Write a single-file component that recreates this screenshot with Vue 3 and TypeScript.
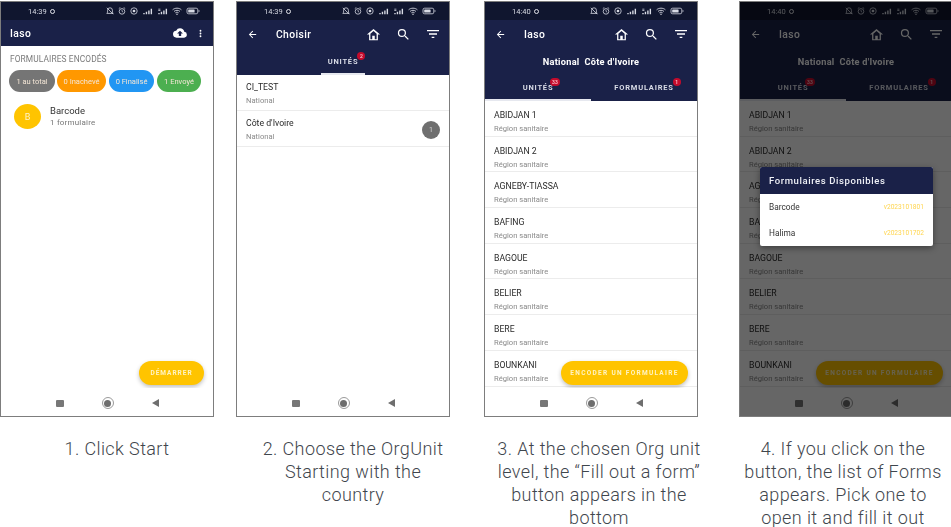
<script setup lang="ts">
interface Org { name: string; sub: string; count?: number }

const regions: Org[] = ['ABIDJAN 1', 'ABIDJAN 2', 'AGNEBY-TIASSA', 'BAFING', 'BAGOUE', 'BELIER', 'BERE', 'BOUNKANI']
  .map((name) => ({ name, sub: 'Région sanitaire' }))

const countries: Org[] = [
  { name: 'CI_TEST', sub: 'National' },
  { name: "Côte d'Ivoire", sub: 'National', count: 1 },
]
const pills = [
  { label: '1 au total', cls: 'grey' },
  { label: '0 Inachevé', cls: 'orange' },
  { label: '0 Finalisé', cls: 'blue' },
  { label: '1 Envoyé', cls: 'green' },
]
const statusGlyphs = ['mute', 'alarm', 'target', 'sig', 'sig2', 'wifi', 'batt']
const forms = [
  { name: 'Barcode', version: 'v2023101801' },
  { name: 'Halima', version: 'v2023101702' },
]
</script>

<template>
  <div class="board">
    <svg class="defs" aria-hidden="true">
      <defs>
        <symbol id="mute" viewBox="0 0 10 10"><path d="M5 1a3 3 0 0 0-3 3v2.500L1 8h8L8 6.500V4a3 3 0 0 0-3-3zM1 1l8 8" fill="none" stroke="currentColor" stroke-width="1"/></symbol>
        <symbol id="alarm" viewBox="0 0 10 10"><circle cx="5" cy="5.500" r="3.500" fill="none" stroke="currentColor" stroke-width="1"/><path d="M1 2l2-1.500M9 2L7 .5M5 3.500v2l1.500 1" fill="none" stroke="currentColor" stroke-width=".9"/></symbol>
        <symbol id="target" viewBox="0 0 10 10"><circle cx="5" cy="5" r="4" fill="none" stroke="currentColor" stroke-width="1"/><circle cx="5" cy="5" r="1.700" fill="currentColor"/></symbol>
        <symbol id="sig" viewBox="0 0 14 10"><path d="M1 7h2v2H1zM4.500 5.500h2V9h-2zM8 3.500h2V9H8zM11.500 1h2v8h-2z" fill="currentColor"/></symbol>
        <symbol id="sig2" viewBox="0 0 14 10"><path d="M1 1h3v1H1zM1 3h3v1H1zM1 7h2v2H1zM4.500 5.500h2V9h-2zM8 3.500h2V9H8zM11.500 1h2v8h-2z" fill="currentColor"/></symbol>
        <symbol id="wifi" viewBox="0 0 12 10"><path d="M.5 3.500C3.500.8 8.500.8 11.500 3.500M2.300 5.500c2-1.800 5.400-1.800 7.400 0M4 7.300c1.100-1 2.900-1 4 0" fill="none" stroke="currentColor" stroke-width="1.100"/><circle cx="6" cy="9" r=".9" fill="currentColor"/></symbol>
        <symbol id="batt" viewBox="0 0 16 10"><rect x=".5" y="1.500" width="13.500" height="7" rx="2" fill="none" stroke="currentColor" stroke-width="1"/><rect x="2" y="3" width="8" height="4" rx=".8" fill="currentColor"/><path d="M15 4h1v2h-1z" fill="currentColor"/></symbol>
        <symbol id="cloud" viewBox="0 0 24 24"><path fill-rule="evenodd" d="M19.350 10.040A7.490 7.490 0 0 0 12 4a7.500 7.500 0 0 0-6.650 4.040A6 6 0 0 0 6 20h13a5 5 0 0 0 .35-9.960zM14 13v4h-4v-4H7l5-5 5 5z" fill="currentColor"/></symbol>
        <symbol id="dots" viewBox="0 0 24 24"><path d="M12 8a2 2 0 1 0 0-4 2 2 0 0 0 0 4zm0 2a2 2 0 1 0 0 4 2 2 0 0 0 0-4zm0 6a2 2 0 1 0 0 4 2 2 0 0 0 0-4z" fill="currentColor"/></symbol>
        <symbol id="back" viewBox="0 0 24 24"><path d="M20 11H7.830l5.590-5.590L12 4l-8 8 8 8 1.410-1.410L7.830 13H20z" fill="currentColor"/></symbol>
        <symbol id="home" viewBox="0 0 24 24"><path d="M12 3 1.500 12H5v9h14v-9h3.500zM7 19.500v-8.800l5-4.500 5 4.500v8.800h-3V14h-4v5.500z" fill="currentColor" fill-rule="evenodd"/></symbol>
        <symbol id="search" viewBox="0 0 24 24"><path d="M15.500 14h-.79l-.28-.27A6.470 6.470 0 0 0 16 9.500 6.500 6.500 0 1 0 9.500 16c1.610 0 3.090-.59 4.230-1.570l.27.28v.79l5 4.990L20.490 19l-4.990-5zm-6 0a4.500 4.500 0 1 1 0-9 4.500 4.500 0 0 1 0 9z" fill="currentColor"/></symbol>
        <symbol id="filter" viewBox="0 0 24 24"><path d="M10 18h4v-2h-4v2zM3 6v2h18V6H3zm3 7h12v-2H6v2z" fill="currentColor"/></symbol>
      </defs>
    </svg>

    <!-- Step 1 -->
    <section class="step s1">
      <div class="phone">
        <div class="status"><span class="time">14:39</span><i class="rec"></i><span class="glyphs"><svg v-for="g in statusGlyphs" :key="g" :class="['st', g]"><use :href="'#' + g" /></svg></span></div>
        <header class="bar">
          <span class="title plain">Iaso</span>
          <svg class="ic cloud"><use href="#cloud" /></svg>
          <svg class="ic dots"><use href="#dots" /></svg>
        </header>
        <main class="body home">
          <p class="section">FORMULAIRES ENCODÉS</p>
          <div class="pills"><span v-for="p in pills" :key="p.label" :class="['pill', p.cls]">{{ p.label }}</span></div>
          <div class="form-row">
            <span class="avatar">B</span>
            <div><div class="form-name">Barcode</div><div class="form-sub">1 formulaire</div></div>
          </div>
        </main>
        <button class="fab start">DÉMARRER</button>
        <nav class="nav"><i class="sq"></i><i class="ring"></i><i class="tri"></i></nav>
      </div>
      <p class="caption">1. Click Start</p>
    </section>

    <!-- Step 2 -->
    <section class="step s2">
      <div class="phone">
        <div class="status"><span class="time">14:39</span><i class="rec"></i><span class="glyphs"><svg v-for="g in statusGlyphs" :key="g" :class="['st', g]"><use :href="'#' + g" /></svg></span></div>
        <header class="bar tall">
          <svg class="ic back"><use href="#back" /></svg>
          <span class="title">Choisir</span>
          <svg class="ic home-ic"><use href="#home" /></svg>
          <svg class="ic search"><use href="#search" /></svg>
          <svg class="ic filter"><use href="#filter" /></svg>
        </header>
        <div class="tabs single">
          <div class="tab active"><span class="tab-label">UNITÉS<b class="badge">2</b></span></div>
        </div>
        <main class="body">
          <div v-for="o in countries" :key="o.name" class="org">
            <div><div class="org-name">{{ o.name }}</div><div class="org-sub">{{ o.sub }}</div></div>
            <span v-if="o.count" class="count">{{ o.count }}</span>
          </div>
        </main>
        <nav class="nav"><i class="sq"></i><i class="ring"></i><i class="tri"></i></nav>
      </div>
      <p class="caption">2. Choose the OrgUnit Starting with the country</p>
    </section>

    <!-- Step 3 -->
    <section class="step s3">
      <div class="phone">
        <div class="status"><span class="time">14:40</span><i class="rec"></i><span class="glyphs"><svg v-for="g in statusGlyphs" :key="g" :class="['st', g]"><use :href="'#' + g" /></svg></span></div>
        <header class="bar tall">
          <svg class="ic back"><use href="#back" /></svg>
          <span class="title plain">Iaso</span>
          <svg class="ic home-ic"><use href="#home" /></svg>
          <svg class="ic search"><use href="#search" /></svg>
          <svg class="ic filter"><use href="#filter" /></svg>
        </header>
        <div class="crumb">National&nbsp;&nbsp;Côte d'Ivoire</div>
        <div class="tabs">
          <div class="tab active"><span class="tab-label">UNITÉS<b class="badge">33</b></span></div>
          <div class="tab"><span class="tab-label">FORMULAIRES<b class="badge">1</b></span></div>
        </div>
        <main class="body list">
          <div v-for="o in regions" :key="o.name" class="org region">
            <div><div class="org-name">{{ o.name }}</div><div class="org-sub">{{ o.sub }}</div></div>
          </div>
        </main>
        <button class="fab encode">ENCODER UN FORMULAIRE</button>
        <nav class="nav"><i class="sq"></i><i class="ring"></i><i class="tri"></i></nav>
      </div>
      <p class="caption">3. At the chosen Org unit level, the “Fill out a form” button appears in the bottom</p>
    </section>

    <!-- Step 4 -->
    <section class="step s4">
      <div class="phone">
        <div class="status"><span class="time">14:40</span><i class="rec"></i><span class="glyphs"><svg v-for="g in statusGlyphs" :key="g" :class="['st', g]"><use :href="'#' + g" /></svg></span></div>
        <header class="bar tall">
          <svg class="ic back"><use href="#back" /></svg>
          <span class="title plain">Iaso</span>
          <svg class="ic home-ic"><use href="#home" /></svg>
          <svg class="ic search"><use href="#search" /></svg>
          <svg class="ic filter"><use href="#filter" /></svg>
        </header>
        <div class="crumb">National&nbsp;&nbsp;Côte d'Ivoire</div>
        <div class="tabs">
          <div class="tab active"><span class="tab-label">UNITÉS<b class="badge">33</b></span></div>
          <div class="tab"><span class="tab-label">FORMULAIRES<b class="badge">1</b></span></div>
        </div>
        <main class="body list">
          <div v-for="o in regions" :key="o.name" class="org region">
            <div><div class="org-name">{{ o.name }}</div><div class="org-sub">{{ o.sub }}</div></div>
          </div>
        </main>
        <button class="fab encode">ENCODER UN FORMULAIRE</button>
        <nav class="nav"><i class="sq"></i><i class="ring"></i><i class="tri"></i></nav>
        <div class="scrim"></div>
        <div class="dialog">
          <div class="dialog-head">Formulaires Disponibles</div>
          <div v-for="f in forms" :key="f.name" class="dialog-row"><span>{{ f.name }}</span><em>{{ f.version }}</em></div>
        </div>
      </div>
      <p class="caption">4. If you click on the button, the list of Forms appears. Pick one to open it and fill it out</p>
    </section>
  </div>
</template>

<style>
html, body { margin: 0; background: #fff; overflow: hidden; }
</style>

<style scoped>
.board {
  width: 951px;
  height: 527px;
  overflow: hidden;
  display: flex;
  align-items: flex-start;
  padding-top: 1px;
  box-sizing: border-box;
  font-family: Roboto, "Liberation Sans", sans-serif;
}
.defs { position: absolute; width: 0; height: 0; }
.step { flex: 0 0 214px; min-width: 0; }
.s2 { margin-left: 22px; }
.s3 { margin-left: 34px; }
.s4 { margin-left: 41px; }

.phone {
  position: relative;
  width: 214px;
  height: 416px;
  box-sizing: border-box;
  border: 1px solid #7d7d7d;
  background: #fff;
  display: flex;
  flex-direction: column;
  overflow: hidden;
}
.phone > *:not(.scrim):not(.dialog) { filter: blur(.35px); }

.status {
  flex: 0 0 18px;
  background: #10162f;
  color: #d8dbe4;
  display: flex;
  align-items: center;
  padding: 0 13px 0 27px;
  font-size: 7.500px;
}
.rec { width: 5px; height: 5px; border-radius: 50%; margin-left: 3px; box-sizing: border-box; border: 1.500px solid #e2e4ea; }
.glyphs { margin-left: auto; display: flex; align-items: center; gap: 4px; }
.st { width: 8px; height: 8px; color: #d8dbe4; }
.st.sig, .st.sig2 { width: 11px; height: 7px; }
.st.wifi { width: 10px; }
.st.batt { width: 14px; }

.bar {
  flex: 0 0 26px;
  background: #1a2148;
  color: #fff;
  display: flex;
  align-items: center;
  padding: 0 9px;
}
.bar.tall { flex-basis: 28px; padding: 0 8px 0 10px; }
.title { font-size: 10.300px; font-weight: 500; letter-spacing: .4px; margin-left: 18px; }
.bar > .title.plain:first-child { margin-left: 0; }
.ic { color: #fff; flex: none; }
.cloud { width: 14px; height: 14px; margin-left: auto; }
.dots { width: 11px; height: 11px; margin-left: 8px; margin-right: -2px; }
.back { width: 11px; height: 11px; }
.home-ic { width: 15px; height: 15px; margin-left: auto; }
.search { width: 15px; height: 15px; margin-left: 15px; }
.filter { width: 16px; height: 16px; margin-left: 14px; }

.crumb {
  background: #1a2148;
  color: #fff;
  flex: 0 0 26px;
  display: flex;
  align-items: center;
  justify-content: center;
  font-size: 9.200px;
  font-weight: 700;
  letter-spacing: .25px;
}
.tabs {
  background: #1a2148;
  flex: 0 0 27px;
  display: flex;
  position: relative;
}
.tab {
  flex: 1;
  display: flex;
  align-items: center;
  justify-content: center;
  border-bottom: 2px solid transparent;
  box-sizing: border-box;
}
.tab.active { border-bottom-color: #e6e8ef; }
.tabs.single { justify-content: center; }
.tabs.single .tab { flex: 0 0 44px; }
.tab-label {
  position: relative;
  color: #d8dbe6;
  font-size: 7.500px;
  font-weight: 700;
  letter-spacing: .8px;
  top: 1px;
}
.badge {
  position: absolute;
  right: -7px;
  top: -5px;
  min-width: 8px;
  height: 8px;
  padding: 0 2.500px;
  box-sizing: border-box;
  border-radius: 4px;
  background: #c40b2c;
  color: #ffc9d2;
  font-size: 5px;
  line-height: 8px;
  text-align: center;
  letter-spacing: 0;
  font-weight: 500;
}

.body { flex: 1; min-height: 0; background: #fff; overflow: hidden; }
.section { margin: 0; padding: 8px 0 0 9px; font-size: 8.400px; line-height: 10px; color: #7b7b7b; letter-spacing: .1px; }
.pills { display: flex; gap: 2px; padding: 6px 13px 0 8px; }
.pill {
  height: 22px;
  border-radius: 11px;
  color: #f4e6d6;
  font-size: 7.500px;
  display: flex;
  align-items: center;
  justify-content: center;
  padding: 0 7px;
  flex: auto;
  white-space: nowrap;
}
.grey { background: #757575; width: 46px; flex: none; box-sizing: border-box; }
.orange { background: #ff9800; width: 49px; flex: none; box-sizing: border-box; }
.blue { background: #2196f3; width: 45px; flex: none; box-sizing: border-box; margin-left: 1px; }
.green { background: #4caf50; width: 44px; flex: none; box-sizing: border-box; margin-left: 1px; }

.form-row { display: flex; align-items: center; gap: 9px; padding: 12px 0 0 13px; }
.avatar {
  width: 27px; height: 25px; border-radius: 50%;
  background: #ffc400; color: #fff3cf;
  display: flex; align-items: center; justify-content: center;
  font-size: 9px;
}
.form-name { font-size: 9.500px; color: #333; line-height: 12px; }
.form-sub { font-size: 8px; color: #777; line-height: 11px; letter-spacing: .2px; }

.org {
  height: 36px;
  box-sizing: border-box;
  border-bottom: 1px solid #ececec;
  padding: 7px 9px 0 9px;
  display: flex;
  justify-content: space-between;
}
.region { height: 35.700px; padding-top: 9px; }
.org-name { font-size: 8.700px; line-height: 11px; color: #2a2a2a; }
.org-sub { font-size: 7.600px; line-height: 9px; margin-top: 3px; color: #8a8a8a; }
.count {
  width: 18px; height: 18px; border-radius: 50%;
  background: #6f6f6f; color: #d5d5d5;
  display: flex; align-items: center; justify-content: center;
  font-size: 7px;
  margin: 3px 0 0;
}

.nav {
  flex: 0 0 28px;
  background: #fff;
  box-sizing: border-box;
  position: relative;
  display: flex;
  align-items: center;
  justify-content: center;
  gap: 38px;
  padding-top: 2px;
}
.sq { width: 8px; height: 7px; background: #777; border-radius: 1px; }
.ring { width: 12px; height: 12px; border: 1px solid #9a9a9a; border-radius: 50%; box-sizing: border-box; position: relative; }
.ring::after { content: ""; position: absolute; inset: 1.500px; border-radius: 50%; background: #6e6e6e; }
.tri { width: 0; height: 0; border-style: solid; border-width: 4px 7px 4px 0; border-color: transparent #6e6e6e transparent transparent; }

.fab {
  position: absolute;
  top: 359px;
  height: 24px;
  border: 0;
  border-radius: 12px;
  background: #ffc400;
  color: #fff3c4;
  font-family: Roboto, sans-serif;
  font-size: 6.500px;
  font-weight: 700;
  letter-spacing: 1px;
  box-shadow: 0 2px 4px rgba(0, 0, 0, .25);
  padding: 0;
}
.start { right: 9px; width: 65px; }
.encode { right: 9px; width: 127px; letter-spacing: 1.300px; }

.scrim { position: absolute; inset: 0; background: rgba(0, 0, 0, .6); }
.dialog {
  position: absolute;
  left: 20px;
  top: 165px;
  width: 173px;
  background: #fff;
  border-radius: 2px;
  box-shadow: 0 2px 6px rgba(0, 0, 0, .4);
  filter: blur(.3px);
}
.dialog-head {
  height: 27px;
  background: #1a2148;
  color: #eef0f6;
  font-size: 9.500px;
  font-weight: 500;
  letter-spacing: .6px;
  display: flex;
  align-items: center;
  padding-left: 9px;
  border-radius: 2px 2px 0 0;
}
.dialog-row {
  height: 26px;
  display: flex;
  align-items: center;
  justify-content: space-between;
  padding: 0 9px;
  font-size: 8.300px;
  color: #333;
}
.dialog-row em { font-style: normal; font-size: 6.600px; color: #ffd54f; }

.caption {
  margin: 20px 0 0;
  font-size: 18px;
  line-height: 23px;
  font-weight: 300;
  letter-spacing: .4px;
  color: #3f464d;
  text-align: center;
  box-sizing: border-box;
  position: relative;
}
.s1 .caption { left: 10px; }
.s2 .caption { left: 10px; padding: 0 12px; }
.s3 .caption { left: 8px; padding: 0 1px; }
.s4 .caption { left: -3px; padding: 0 4px; }
</style>
